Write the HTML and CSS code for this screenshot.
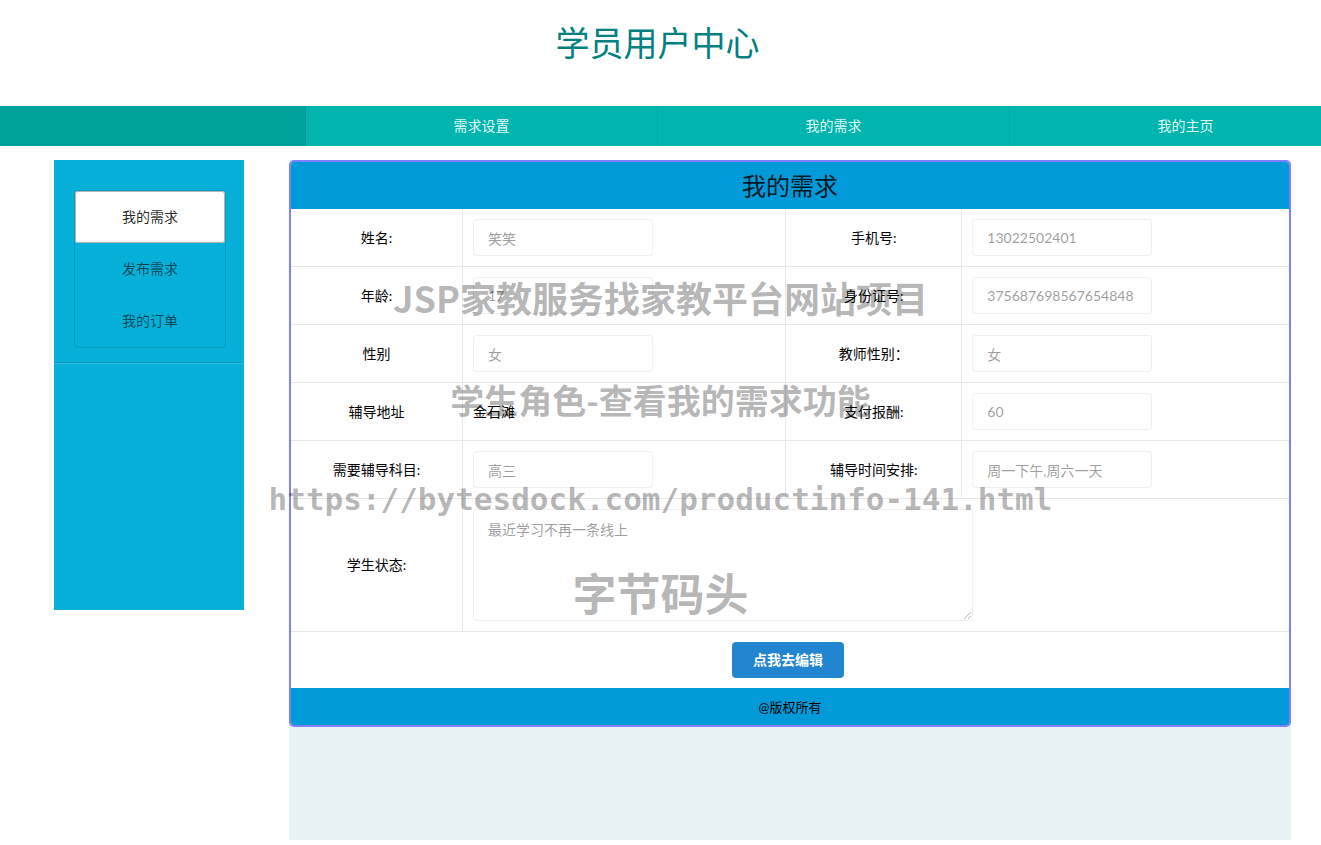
FILE: index.html
```
<!DOCTYPE html>
<html lang="zh-CN">
<head>
    <meta charset="UTF-8">
    <meta name="viewport" content="width=device-width, initial-scale=1.0">
    <title>学员用户中心</title>
    <link rel="stylesheet" href="styles.css">
</head>
<body>
    <header class="page-header">
        <h1>学员用户中心</h1>
    </header>

    <nav class="top-nav">
        <span class="nav-item active"></span>
        <a class="nav-item" href="#">需求设置</a>
        <a class="nav-item" href="#">我的需求</a>
        <a class="nav-item" href="#">我的主页</a>
    </nav>

    <div class="container">
        <aside class="sidebar">
            <div class="side-section">
                <div class="side-menu">
                    <a class="side-item active" href="#">我的需求</a>
                    <a class="side-item" href="#">发布需求</a>
                    <a class="side-item" href="#">我的订单</a>
                </div>
            </div>
        </aside>

        <main class="content">
            <form class="panel">
                <table class="info-table">
                    <colgroup>
                        <col class="col-label">
                        <col class="col-value">
                        <col class="col-label-wide">
                        <col>
                    </colgroup>
                    <thead>
                        <tr><th colspan="4">我的需求</th></tr>
                    </thead>
                    <tbody>
                        <tr>
                            <td class="label"><label for="name">姓名:</label></td>
                            <td><input type="text" id="name" value="笑笑" disabled></td>
                            <td class="label"><label for="phone">手机号:</label></td>
                            <td><input type="text" id="phone" value="13022502401" disabled></td>
                        </tr>
                        <tr>
                            <td class="label"><label for="age">年龄:</label></td>
                            <td><input type="text" id="age" value="17" disabled></td>
                            <td class="label"><label for="idcard">身份证号:</label></td>
                            <td><input type="text" id="idcard" value="375687698567654848" disabled></td>
                        </tr>
                        <tr>
                            <td class="label"><label for="sex">性别</label></td>
                            <td><input type="text" id="sex" value="女" disabled></td>
                            <td class="label"><label for="teacher-sex">教师性别：</label></td>
                            <td><input type="text" id="teacher-sex" value="女" disabled></td>
                        </tr>
                        <tr>
                            <td class="label">辅导地址</td>
                            <td>金石滩</td>
                            <td class="label"><label for="pay">支付报酬:</label></td>
                            <td><input type="text" id="pay" value="60" disabled></td>
                        </tr>
                        <tr>
                            <td class="label"><label for="subject">需要辅导科目:</label></td>
                            <td><input type="text" id="subject" value="高三" disabled></td>
                            <td class="label"><label for="schedule">辅导时间安排:</label></td>
                            <td><input type="text" id="schedule" value="周一下午,周六一天" disabled></td>
                        </tr>
                        <tr>
                            <td class="label"><label for="status">学生状态:</label></td>
                            <td colspan="3"><textarea id="status" disabled>最近学习不再一条线上</textarea></td>
                        </tr>
                        <tr>
                            <td class="actions" colspan="4"><button type="button">点我去编辑</button></td>
                        </tr>
                    </tbody>
                    <tfoot>
                        <tr><td colspan="4">@版权所有</td></tr>
                    </tfoot>
                </table>
            </form>
        </main>
    </div>

    <!-- watermark over the page -->
    <div class="watermark">
        <p class="mark-title">JSP家教服务找家教平台网站项目</p>
        <p class="mark-feature">学生角色-查看我的需求功能</p>
        <p class="mark-url">https://bytesdock.com/productinfo-141.html</p>
        <p class="mark-brand">字节码头</p>
    </div>
</body>
</html>
```

FILE: styles.css
```
* {
    box-sizing: border-box;
}

body {
    position: relative;
    margin: 0;
    font-family: Lato, "Noto Sans CJK SC", sans-serif;
    font-size: 14px;
    line-height: 20px;
    color: rgba(0, 0, 0, 0.87);
    background: #fff;
    overflow-x: hidden;
}

.page-header {
    height: 106px;
    padding-top: 20px;
    padding-right: 6px;
    text-align: center;
}

.page-header h1 {
    margin: 0;
    font-size: 34px;
    font-weight: 400;
    line-height: 46px;
    color: #008080;
}

/* Top navigation */
.top-nav {
    display: grid;
    grid-template-columns: 306px repeat(3, minmax(352px, 1fr));
    height: 40px;
    overflow: hidden;
    background: #00b5ad;
}

.nav-item {
    display: flex;
    align-items: center;
    justify-content: center;
    border-right: 1px solid rgba(34, 36, 38, 0.1);
    color: rgba(255, 255, 255, 0.9);
    text-decoration: none;
}

.top-nav .active {
    background: #00a39c;
}

.container {
    display: flex;
    align-items: flex-start;
    gap: 45px;
    padding: 14px 30px 5px 54px;
}

/* Left menu */
.sidebar {
    flex: 0 0 190px;
    min-height: 450px;
    background: #06b0d9;
}

.side-section {
    padding: 30px 18px 14px 20px;
    border-bottom: 1px solid rgba(34, 36, 38, 0.15);
    box-shadow: 0 1px 0 rgba(255, 255, 255, 0.15);
}

.side-menu {
    border: 1px solid rgba(34, 36, 38, 0.15);
    border-radius: 4px;
}

.side-item {
    display: block;
    padding: 16px 0;
    text-align: center;
    color: rgba(0, 0, 0, 0.6);
    text-decoration: none;
}

.side-item.active {
    background: #fff;
    border-radius: 3px;
    box-shadow: inset 0 0 0 1px #b5b5b5;
    color: rgba(0, 0, 0, 0.87);
}

/* Content */
.content {
    flex: 1;
    min-width: 0;
    min-height: 680px;
    background: #e7f3f5;
}

.panel {
    border: 2px solid #8080ff;
    border-radius: 5px;
    background: #fff;
    overflow: hidden;
}

.info-table {
    width: 100%;
    table-layout: fixed;
    border-collapse: separate;
    border-spacing: 0;
}

.col-label {
    width: 172px;
}

.col-value {
    width: 32.4%;
}

.col-label-wide {
    width: 176px;
}

.info-table th {
    height: 47px;
    padding: 0;
    background: #009ad9;
    font-size: 24px;
    font-weight: 400;
}

.info-table td {
    height: 58px;
    padding: 10px;
    border-right: 1px solid #e8e8e8;
    border-bottom: 1px solid #e8e8e8;
    color: #000;
}

.info-table td:last-child {
    border-right: none;
}

.info-table .label {
    text-align: center;
}

.info-table input,
.info-table textarea {
    display: block;
    padding: 8px 14px;
    border: 1px solid rgba(34, 36, 38, 0.15);
    border-radius: 4px;
    background: #fff;
    font: inherit;
    color: rgba(0, 0, 0, 0.87);
    opacity: 0.45;
}

.info-table input {
    width: 180px;
    height: 37px;
}

.info-table textarea {
    width: 500px;
    max-width: 100%;
    height: 112px;
    padding: 10px 14px;
    resize: both;
}

.info-table .actions {
    height: 56px;
    padding-right: 14px;
    border-bottom: none;
    text-align: center;
}

.actions button {
    width: 112px;
    height: 36px;
    padding: 0;
    border: none;
    border-radius: 4px;
    background: #2185d0;
    color: #fff;
    font: inherit;
    font-weight: 700;
    vertical-align: top;
    cursor: pointer;
}

.info-table tfoot td {
    height: 37px;
    padding: 0;
    border: none;
    background: #009ad9;
    font-size: 13px;
    text-align: center;
}

/* Watermark */
.watermark {
    position: absolute;
    top: 247px;
    left: 0;
    right: 0;
    color: rgba(0, 0, 0, 0.3);
    font-family: "Noto Sans CJK SC", sans-serif;
    font-weight: 700;
    text-align: center;
    white-space: nowrap;
    pointer-events: none;
}

.watermark p {
    margin: 0;
}

.mark-title {
    font-size: 36px;
    line-height: 100px;
}

.mark-feature {
    font-size: 34px;
    line-height: 106px;
}

.mark-url {
    font-family: "DejaVu Sans Mono", monospace;
    font-size: 31px;
    line-height: 92px;
}

.mark-brand {
    font-size: 44px;
    line-height: 94px;
}
```
